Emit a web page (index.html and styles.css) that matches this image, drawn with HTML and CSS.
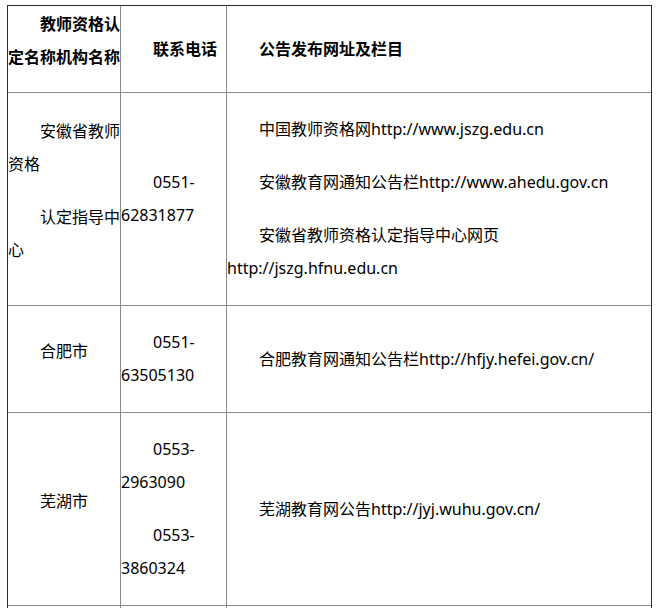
FILE: index.html
```html
<!DOCTYPE html>
<html lang="zh-CN">
<head>
<meta charset="utf-8">
<title>教师资格认定机构</title>
<link rel="stylesheet" href="styles.css">
</head>
<body>
<div class="page">
  <div class="grid">
    <div class="cell c1 head"><p>教师资格认定名称机构名称</p></div>
    <div class="cell c2 head"><p>联系电话</p></div>
    <div class="cell c3 head"><p>公告发布网址及栏目</p></div>

    <div class="cell c1"><p>安徽省教师资格</p><p>认定指导中心</p></div>
    <div class="cell c2"><p>0551-62831877</p></div>
    <div class="cell c3"><p>中国教师资格网http://www.jszg.edu.cn</p><p>安徽教育网通知公告栏http://www.ahedu.gov.cn</p><p>安徽省教师资格认定指导中心网页http://jszg.hfnu.edu.cn</p></div>

    <div class="cell c1"><p>合肥市</p></div>
    <div class="cell c2"><p>0551-63505130</p></div>
    <div class="cell c3"><p>合肥教育网通知公告栏http://hfjy.hefei.gov.cn/</p></div>

    <div class="cell c1"><p>芜湖市</p></div>
    <div class="cell c2"><p>0553-2963090</p><p>0553-3860324</p></div>
    <div class="cell c3"><p>芜湖教育网公告http://jyj.wuhu.gov.cn/</p></div>

    <div class="cell c1"></div>
    <div class="cell c2"></div>
    <div class="cell c3"></div>
  </div>
</div>
</body>
</html>
```

FILE: styles.css
```css
html, body {
  margin: 0;
  padding: 0;
  background: #ffffff;
}

body {
  font-family: "Noto Sans", "Noto Sans CJK SC", sans-serif;
  font-size: 16px;
  line-height: 33px;
  color: #000000;
}

.page {
  padding: 5px 0 0 7px;
}

.grid {
  display: grid;
  width: 645px;
  box-sizing: border-box;
  grid-template-columns: 113px 106px 424px;
  grid-template-rows: 87px 213px 107px 193px 120px;
  border-top: 1px solid #2b2b2b;
  border-left: 1px solid #2b2b2b;
  border-right: 1px solid #2b2b2b;
}

.cell {
  display: flex;
  flex-direction: column;
  justify-content: center;
  box-sizing: border-box;
  border-bottom: 1px solid #8a8a8a;
  border-right: 1px solid #8a8a8a;
  padding: 0;
}

.cell.c3 {
  border-right: none;
}

.cell.c1 {
  padding-bottom: 16px;
}

.cell p {
  margin: 0;
  text-indent: 32px;
}

.cell p + p {
  margin-top: 20px;
}

.head p {
  font-weight: bold;
}
```
